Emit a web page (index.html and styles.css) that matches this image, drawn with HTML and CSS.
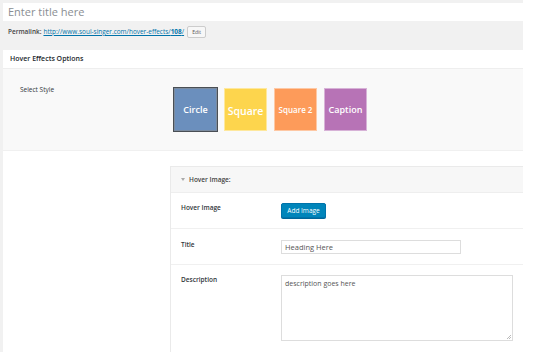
FILE: index.html
```html
<!DOCTYPE html>
<html>
<head>
<meta charset="utf-8">
<link rel="stylesheet" href="styles.css">
</head>
<body>
<div class="wrap">
  <div class="title-input">Enter title here</div>
  <div class="permalink">
    <span class="pl-label">Permalink:</span>
    <a class="pl-link">http://www.soul-singer.com/hover-effects/<b>108</b>/</a>
    <span class="edit-btn">Edit</span>
  </div>
  <div class="metabox">
    <div class="mb-head">Hover Effects Options</div>
    <div class="style-row">
      <div class="style-label">Select Style</div>
      <div class="styles">
        <div class="style-box circle selected">Circle</div>
        <div class="style-box square">Square</div>
        <div class="style-box square2">Square 2</div>
        <div class="style-box caption">Caption</div>
      </div>
    </div>
    <div class="mb-body">
      <div class="panel">
        <div class="panel-head"><span class="arrow"></span>Hover Image:</div>
        <div class="row">
          <div class="row-label">Hover Image</div>
          <div class="add-btn">Add Image</div>
        </div>
        <div class="row">
          <div class="row-label">Title</div>
          <div class="text-input">Heading Here</div>
        </div>
        <div class="row row-last">
          <div class="row-label">Description</div>
          <div class="textarea">description goes here<span class="grip"></span></div>
        </div>
      </div>
    </div>
  </div>
</div>
</body>
</html>
```

FILE: styles.css
```css
* { box-sizing: border-box; }
html, body { margin: 0; padding: 0; background: #fff; }
body { font-family: "Open Sans", "Noto Sans", sans-serif; color: #23282d; }

.wrap {
  width: 523px;
  height: 352px;
  background: #f1f1f1;
  padding: 3px 0 0 3px;
  overflow: hidden;
}

.title-input {
  height: 18px;
  background: #fff;
  font-size: 11px;
  line-height: 18px;
  padding-left: 5px;
  color: #8a8e93;
}

.permalink {
  display: flex;
  align-items: center;
  padding: 5px 0 12px 5px;
  font-size: 6.45px;
  line-height: 12px;
  height: 29px;
}
.pl-label { font-weight: 600; color: #444; margin-right: 2px; }
.pl-link { color: #0073aa; text-decoration: underline; }
.pl-link b { font-weight: 700; }
.edit-btn {
  margin-left: 3px;
  width: 19px;
  height: 12px;
  border: 1px solid #ccc;
  background: #f7f7f7;
  border-radius: 2px;
  font-size: 5px;
  line-height: 10px;
  text-align: center;
  color: #555;
}

.metabox { background: #fff; }
.mb-head {
  height: 19px;
  padding-left: 7px;
  font-size: 7px;
  font-weight: 600;
  line-height: 18px;
  border-bottom: 1px solid #eee;
}

.style-row {
  display: flex;
  background: #f9f9f9;
  height: 82px;
  padding: 16px 0 0 17px;
  border-bottom: 1px solid #f0f0f0;
}
.style-label {
  width: 154px;
  font-size: 6.5px;
  line-height: 10px;
  color: #32373c;
}
.styles { display: flex; gap: 7px; margin-top: 3px; }
.style-box {
  width: 43px;
  height: 43px;
  display: flex;
  align-items: center;
  justify-content: center;
  color: #fff;
  font-weight: 600;
  border: 1px solid rgba(255,255,255,0.45);
}
.circle { background: #6b8fbd; font-size: 9px; }
.square { background: #fdd54d; font-size: 10.5px; padding-top: 3px; }
.square2 { background: #fd9b5a; font-size: 8px; }
.caption { background: #b773b6; font-size: 9px; }
.selected { border: 1px solid #7c8ca0; box-shadow: 0 0 0 1px #4a4f55; }

.mb-body { padding: 15px 0 0 167px; height: 201px; }
.panel {
  border-left: 1px solid #eaeaea;
  border-top: 1px solid #eaeaea;
  height: 100%;
}
.panel-head {
  display: flex;
  align-items: center;
  height: 26px;
  background: #f7f7f7;
  padding-left: 10px;
  font-size: 6.5px;
  font-weight: 600;
  color: #444;
  border-bottom: 1px solid #eee;
}
.arrow {
  width: 0;
  height: 0;
  border-left: 2px solid transparent;
  border-right: 2px solid transparent;
  border-top: 3px solid #aaa;
  margin-right: 4px;
}

.row {
  display: flex;
  align-items: flex-start;
  padding: 10px 0 10px 10px;
  border-bottom: 1px solid #f0f0f0;
}
.row:nth-child(3) { padding: 11px 0 10px 10px; }
.row-last { border-bottom: none; }
.row-label {
  width: 100px;
  font-size: 6.5px;
  font-weight: 600;
  line-height: 10px;
  color: #32373c;
}
.add-btn {
  width: 45px;
  height: 15px;
  background: #0085ba;
  border: 1px solid #0073aa;
  border-radius: 2px;
  color: #fff;
  font-size: 6.5px;
  line-height: 13px;
  text-align: center;
  box-shadow: 0 1px 0 #006799;
}
.text-input {
  width: 180px;
  height: 14px;
  border: 1px solid #ddd;
  padding-left: 3px;
  font-size: 7.5px;
  line-height: 12px;
  color: #555;
}
.textarea {
  position: relative;
  width: 232px;
  height: 66px;
  border: 1px solid #ddd;
  padding: 3px 0 0 3px;
  font-size: 7px;
  line-height: 9px;
  color: #555;
}
.grip {
  position: absolute;
  right: 1px;
  bottom: 1px;
  width: 4px;
  height: 4px;
  background: linear-gradient(135deg, transparent 50%, #bbb 50%, #bbb 60%, transparent 60%, transparent 75%, #bbb 75%, #bbb 85%, transparent 85%);
}
```
